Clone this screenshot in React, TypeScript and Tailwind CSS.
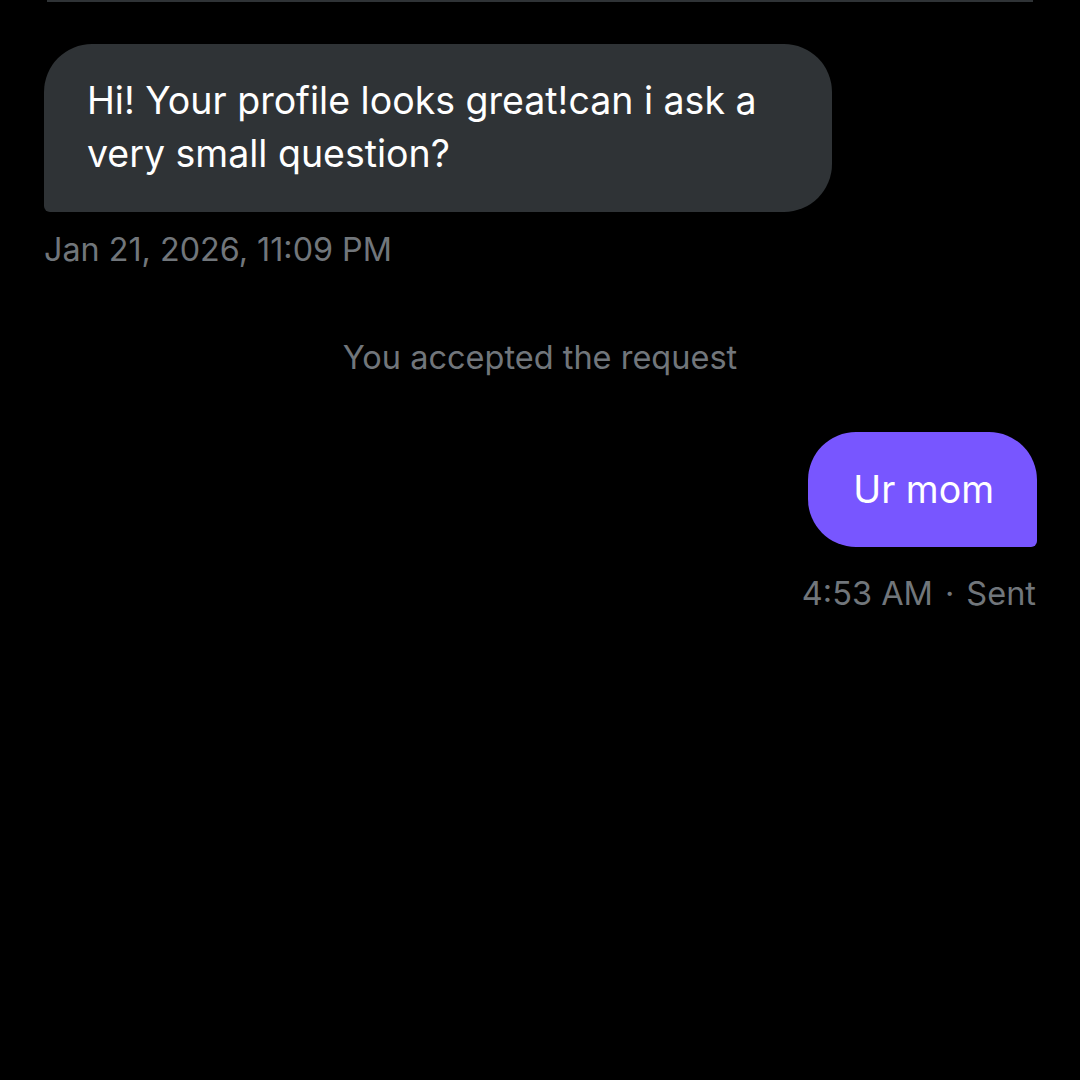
export default function App() {
  return (
    <div
      className="w-[1080px] h-[1080px] bg-black overflow-hidden"
      style={{ fontFamily: 'Inter, "Noto Sans", sans-serif' }}
    >
      {/* 上一条的分隔线 */}
      <div className="mx-[47px] h-[2px] bg-[#2f3336]" />

      <div className="px-[44px] pt-[42px] flex flex-col">
        {/* 对方的消息 */}
        <div className="self-start w-[788px] bg-[#2f3336] text-white rounded-[48px] rounded-bl-[6px] pl-[43px] pr-[40px] pt-[30px] pb-[32px] text-[37.5px] leading-[53px]">
          Hi! Your profile looks great!can i ask a very small question?
        </div>
        <div className="mt-[18px] text-[32.3px] leading-[40px] text-[#71767b]">
          Jan 21, 2026, 11:09 PM
        </div>

        <div className="mt-[68px] text-center text-[32.5px] leading-[40px] text-[#71767b]">
          You accepted the request
        </div>

        {/* 自己的消息 */}
        <div className="mt-[54px] self-end bg-[#7856ff] text-white rounded-[48px] rounded-br-[6px] pl-[45px] pr-[43px] py-[31px] text-[37.5px] leading-[53px] -mr-[1px]">
          Ur mom
        </div>
        <div className="mt-[27px] self-end flex items-center gap-[12px] text-[32.5px] leading-[40px] text-[#71767b]">
          <span>4:53 AM</span>
          <span>·</span>
          <span>Sent</span>
        </div>
      </div>
    </div>
  )
}
